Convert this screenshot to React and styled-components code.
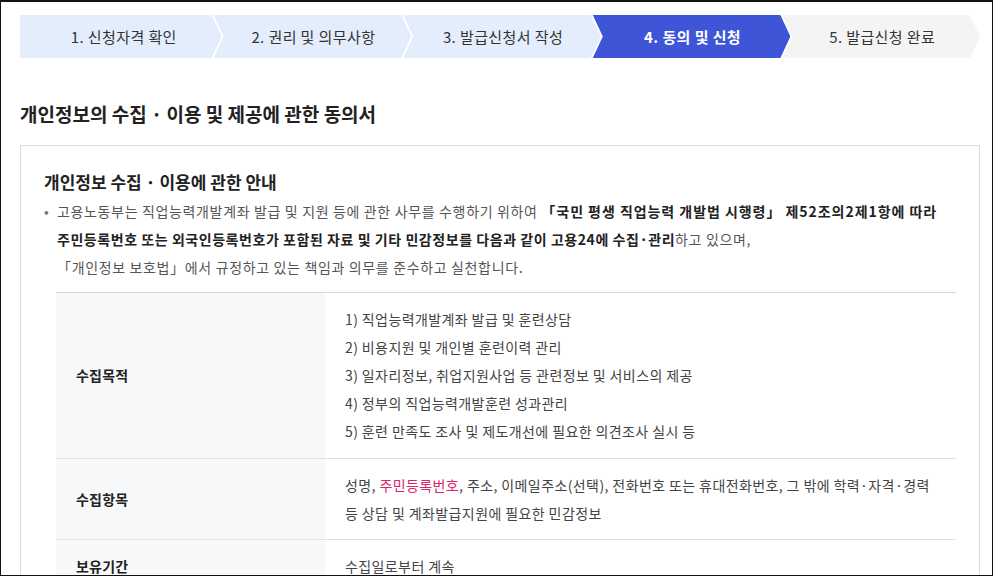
import React from "react";
import styled, { createGlobalStyle } from "styled-components";

const GlobalStyle = createGlobalStyle`
  * { box-sizing: border-box; }
  html, body { margin: 0; padding: 0; background: #fff; }
  body {
    font-family: "Noto Sans CJK KR", "Noto Sans", sans-serif;
    color: #333;
  }
`;

const Frame = styled.div`
  width: 993px;
  height: 576px;
  border: 1px solid #111;
  border-top-width: 2px;
  overflow: hidden;
  padding: 13px 12px 0 19px;
`;

const Steps = styled.ol`
  display: flex;
  list-style: none;
  margin: 0;
  padding: 0;
  height: 43px;
`;

const Step = styled.li`
  flex: 1;
  display: flex;
  align-items: center;
  justify-content: center;
  margin-left: ${(p) => (p.$first ? "0" : "-8px")};
  padding-left: ${(p) => (p.$first ? "16px" : "12px")};
  padding-right: 10px;
  font-size: 15px;
  letter-spacing: 0.4px;
  font-weight: ${(p) => (p.$state === "active" ? 700 : 400)};
  color: ${(p) => (p.$state === "active" ? "#fff" : "#333")};
  background: ${(p) =>
    p.$state === "active" ? "#3d55d6" : p.$state === "done" ? "#e4edfb" : "#f4f4f4"};
  clip-path: ${(p) =>
    p.$first
      ? "polygon(0 0, calc(100% - 10px) 0, 100% 50%, calc(100% - 10px) 100%, 0 100%)"
      : "polygon(0 0, calc(100% - 10px) 0, 100% 50%, calc(100% - 10px) 100%, 0 100%, 10px 50%)"};
`;

const Title = styled.h2`
  margin: 43px 0 18px;
  font-size: 19px;
  line-height: 26px;
  font-weight: 600;
  color: #222;
`;

const Panel = styled.section`
  border: 1px solid #dcdcdc;
  border-bottom: none;
  padding: 24px 23px 40px;
`;

const PanelHeading = styled.h3`
  margin: 0 0 3px;
  font-size: 17px;
  line-height: 24px;
  font-weight: 700;
  color: #222;
`;

const Bullet = styled.div`
  display: flex;
  font-size: 14px;
  line-height: 28px;
  letter-spacing: 0.65px;
  color: #555;

  &::before {
    content: "•";
    flex: 0 0 13px;
    color: #777;
    letter-spacing: 0;
  }
`;

const Strong = styled.b`
  font-weight: 700;
  letter-spacing: ${(p) => p.$track ?? 0.55}px;
  color: #222;
`;

const Table = styled.table`
  margin: 11px 0 0 12px;
  width: calc(100% - 12px);
  border-collapse: collapse;
  border-top: 1px solid #d6d6d6;
  font-size: 14px;
  line-height: 28px;
  letter-spacing: 0.4px;
`;

const Row = styled.tr`
  border-bottom: 1px solid #e0e0e0;
`;

const Head = styled.th`
  width: 269px;
  padding: 12px 20px 13px;
  text-align: left;
  vertical-align: middle;
  font-weight: 700;
  letter-spacing: 0.2px;
  color: #222;
  background: #f7f8f9;
`;

const Cell = styled.td`
  padding: 12px 20px ${(p) => (p.$tight ? "12px" : "13px")};
  color: #444;
  vertical-align: middle;
`;

const Mark = styled.span`
  color: ${(p) => (p.$tone === "pink" ? "#d9246b" : "inherit")};
  text-decoration: ${(p) => (p.$tone === "link" ? "underline" : "none")};
  text-underline-offset: 3px;
`;

const steps = [
  { label: "1. 신청자격 확인", state: "done" },
  { label: "2. 권리 및 의무사항", state: "done" },
  { label: "3. 발급신청서 작성", state: "done" },
  { label: "4. 동의 및 신청", state: "active" },
  { label: "5. 발급신청 완료", state: "todo" },
];

const purposes = [
  "1) 직업능력개발계좌 발급 및 훈련상담",
  "2) 비용지원 및 개인별 훈련이력 관리",
  "3) 일자리정보, 취업지원사업 등 관련정보 및 서비스의 제공",
  "4) 정부의 직업능력개발훈련 성과관리",
  "5) 훈련 만족도 조사 및 제도개선에 필요한 의견조사 실시 등",
];

export default function App() {
  return (
    <>
      <GlobalStyle />
      <Frame>
        <Steps>
          {steps.map((s, i) => (
            <Step key={s.label} $first={i === 0} $state={s.state}>
              {s.label}
            </Step>
          ))}
        </Steps>

        <Title>개인정보의 수집 · 이용 및 제공에 관한 동의서</Title>

        <Panel>
          <PanelHeading>개인정보 수집 · 이용에 관한 안내</PanelHeading>
          <Bullet>
            <div>
              고용노동부는 직업능력개발계좌 발급 및 지원 등에 관한 사무를 수행하기 위하여{" "}
              <Strong $track={0.95}>「국민 평생 직업능력 개발법 시행령」 제52조의2제1항에 따라</Strong>
              <br />
              <Strong>
                주민등록번호 또는 외국인등록번호가 포함된 자료 및 기타 민감정보를 다음과 같이
                고용24에 수집·관리
              </Strong>
              하고 있으며,
              <br />
              「개인정보 보호법」에서 규정하고 있는 책임과 의무를 준수하고 실천합니다.
            </div>
          </Bullet>

          <Table>
            <tbody>
              <Row>
                <Head>수집목적</Head>
                <Cell>
                  {purposes.map((p) => (
                    <div key={p}>{p}</div>
                  ))}
                </Cell>
              </Row>
              <Row>
                <Head>수집항목</Head>
                <Cell $tight>
                  성명, <Mark $tone="pink">주민등록번호</Mark>, 주소, 이메일주소(선택), 전화번호 또는
                  휴대전화번호, 그 밖에 학력·자격·경력
                  <br />등 상담 및 계좌발급지원에 필요한 민감정보
                </Cell>
              </Row>
              <Row>
                <Head>보유기간</Head>
                <Cell>
                  <Mark $tone="link">수집일로부터 계속</Mark>
                </Cell>
              </Row>
            </tbody>
          </Table>
        </Panel>
      </Frame>
    </>
  );
}
